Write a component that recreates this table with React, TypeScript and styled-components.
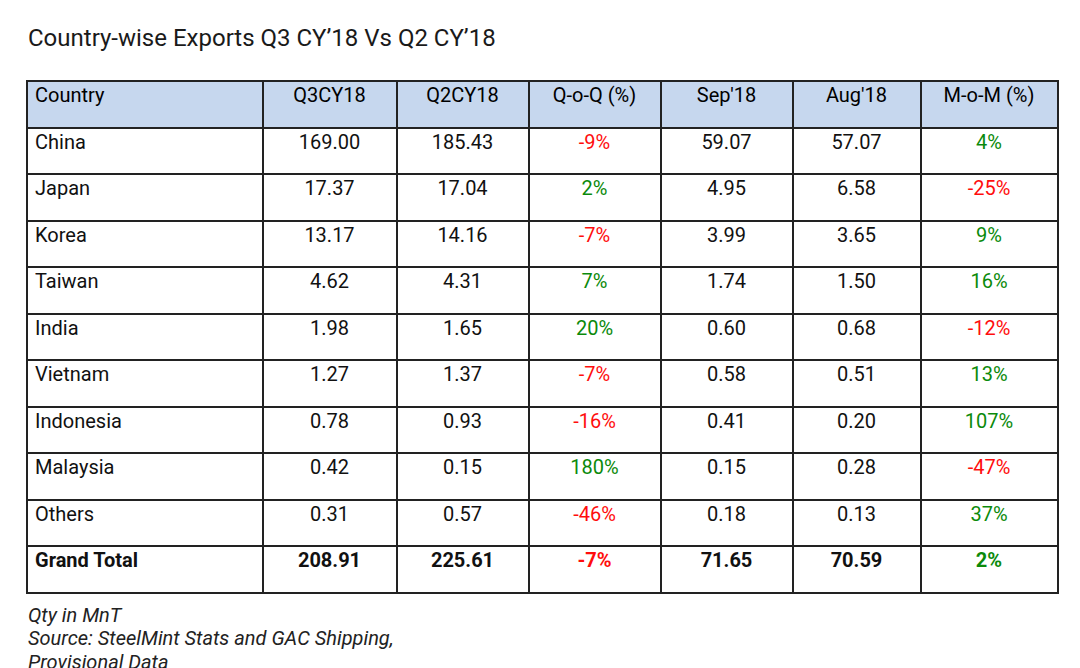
import React from "react";
import styled, { createGlobalStyle } from "styled-components";

const GlobalStyle = createGlobalStyle`
  html, body {
    margin: 0;
    padding: 0;
    background: #fff;
  }
  body {
    font-family: Roboto, "Liberation Sans", Arial, sans-serif;
    color: #111;
  }
`;

const Page = styled.div`
  padding: 24px 0 0 26px;
  height: 668px;
  box-sizing: border-box;
  overflow: hidden;
`;

const Title = styled.h1`
  margin: 0 0 28px 2px;
  font-size: 24px;
  line-height: 28px;
  font-weight: 400;
  color: #1a1a1a;
`;

const Table = styled.table`
  border-collapse: collapse;
  table-layout: fixed;
  width: 1031px;
  font-size: 20px;
`;

const HeadRow = styled.tr`
  background: #c6d7ee;
`;

const Row = styled.tr`
  height: 46.5px;
`;

type CellProps = { $left?: boolean; $bold?: boolean; $tone?: "up" | "down" };

const Cell = styled.td<CellProps>`
  border: 2px solid #222;
  height: 46.5px;
  box-sizing: border-box;
  padding: 2px 8px 0 7px;
  vertical-align: top;
  line-height: 23px;
  text-align: ${(p) => (p.$left ? "left" : "center")};
  font-weight: ${(p) => (p.$bold ? 700 : 400)};
  color: ${(p) =>
    p.$tone === "up" ? "#0b8a0b" : p.$tone === "down" ? "#ff0d0d" : "#111"};
`;

const HeadCell = styled(Cell).attrs({ as: "th" })`
  font-weight: 400;
  color: #000;
`;

const Notes = styled.div`
  margin: 10px 0 0 2px;
  font-style: italic;
  font-size: 20px;
  line-height: 23.5px;
  color: #222;
`;

type Rec = [string, string, string, string, string, string, string];

const rows: Rec[] = [
  ["China", "169.00", "185.43", "-9%", "59.07", "57.07", "4%"],
  ["Japan", "17.37", "17.04", "2%", "4.95", "6.58", "-25%"],
  ["Korea", "13.17", "14.16", "-7%", "3.99", "3.65", "9%"],
  ["Taiwan", "4.62", "4.31", "7%", "1.74", "1.50", "16%"],
  ["India", "1.98", "1.65", "20%", "0.60", "0.68", "-12%"],
  ["Vietnam", "1.27", "1.37", "-7%", "0.58", "0.51", "13%"],
  ["Indonesia", "0.78", "0.93", "-16%", "0.41", "0.20", "107%"],
  ["Malaysia", "0.42", "0.15", "180%", "0.15", "0.28", "-47%"],
  ["Others", "0.31", "0.57", "-46%", "0.18", "0.13", "37%"],
];

const total: Rec = ["Grand Total", "208.91", "225.61", "-7%", "71.65", "70.59", "2%"];

const widths = [236, 134, 132, 132, 132, 128, 137];
const headers = ["Country", "Q3CY18", "Q2CY18", "Q-o-Q (%)", "Sep'18", "Aug'18", "M-o-M (%)"];

const tone = (v: string) => (v.startsWith("-") ? "down" : "up");

const DataRow = ({ rec, bold }: { rec: Rec; bold?: boolean }) => (
  <Row>
    {rec.map((v, i) => (
      <Cell
        key={i}
        $left={i === 0}
        $bold={bold}
        $tone={i === 3 || i === 6 ? tone(v) : undefined}
      >
        {v}
      </Cell>
    ))}
  </Row>
);

export default function App() {
  return (
    <>
      <GlobalStyle />
      <Page>
        <Title>Country-wise Exports Q3 CY’18 Vs Q2 CY’18</Title>
        <Table>
          <colgroup>
            {widths.map((w, i) => (
              <col key={i} style={{ width: w }} />
            ))}
          </colgroup>
          <thead>
            <HeadRow>
              {headers.map((h, i) => (
                <HeadCell key={h} $left={i === 0}>
                  {h}
                </HeadCell>
              ))}
            </HeadRow>
          </thead>
          <tbody>
            {rows.map((r) => (
              <DataRow key={r[0]} rec={r} />
            ))}
            <DataRow rec={total} bold />
          </tbody>
        </Table>
        <Notes>
          Qty in MnT
          <br />
          Source: SteelMint Stats and GAC Shipping,
          <br />
          Provisional Data
        </Notes>
      </Page>
    </>
  );
}
